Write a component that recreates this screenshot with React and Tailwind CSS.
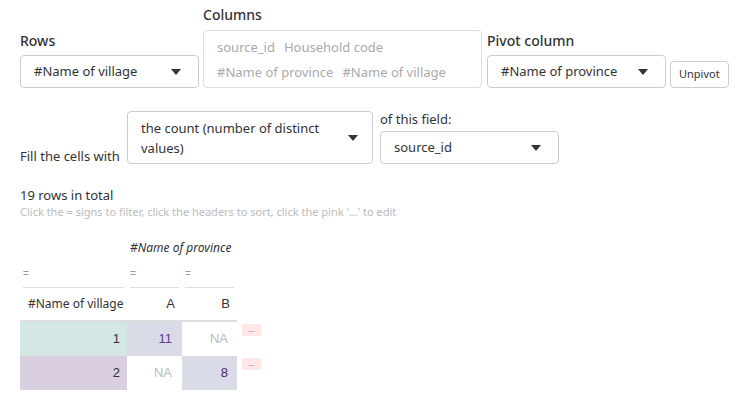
import { useState } from "react";

const Caret = () => (
  <svg width="10" height="6" viewBox="0 0 10 6" className="shrink-0">
    <path d="M0 0 L10 0 L5 6 Z" fill="#333" />
  </svg>
);

const Select = ({ value, className = "" }) => (
  <div
    className={`flex items-center justify-between border border-[#cccccc] rounded-[4px] bg-white pl-[13px] pr-[17px] text-[13px] text-[#333] ${className}`}
  >
    <span>{value}</span>
    <Caret />
  </div>
);

const rows = [
  { name: "1", a: "11", b: "NA", bg: "bg-[#d3e8e5]" },
  { name: "2", a: "NA", b: "8", bg: "bg-[#dacfdf]" },
];

const App = () => {
  const [pivot] = useState("#Name of province");

  return (
    <div className="w-[745px] h-[406px] bg-white pl-[20px] pt-[5px] font-['Noto_Sans',sans-serif] text-[#333]">
      {/* top controls */}
      <div className="flex items-end">
        <div className="w-[179px]">
          <div className="text-[14px] font-medium leading-[20px] mb-[4px]">Rows</div>
          <Select value="#Name of village" className="h-[33px]" />
        </div>
        <div className="ml-[4px]">
          <div className="text-[14px] font-medium leading-[20px] mb-[5px]">Columns</div>
          <div className="w-[279px] h-[58px] border border-[#dddddd] rounded-[4px] pl-[13px] pt-[4px] text-[13px] text-[#aaaaaa] leading-[25px]">
            <div className="flex gap-[9px]">
              <span>source_id</span>
              <span>Household code</span>
            </div>
            <div className="flex gap-[9px]">
              <span>#Name of province</span>
              <span>#Name of village</span>
            </div>
          </div>
        </div>
        <div className="ml-[5px] w-[179px]">
          <div className="text-[14px] font-medium leading-[20px] mb-[4px]">Pivot column</div>
          <Select value={pivot} className="h-[33px]" />
        </div>
        <button className="ml-[4px] h-[27px] px-[8px] border border-[#cccccc] rounded-[4px] text-[11px] text-[#333] bg-white">
          Unpivot
        </button>
      </div>

      {/* fill controls */}
      <div className="flex items-end mt-[21px]">
        <div className="w-[107px] text-[13px] leading-[14px] mb-[1px] whitespace-nowrap">Fill the cells with</div>
        <div className="w-[246px] h-[53px] flex items-center justify-between border border-[#cccccc] rounded-[4px] pl-[13px] pr-[14px] text-[13px] leading-[20px]">
          <span className="w-[185px]">the count (number of distinct values)</span>
          <Caret />
        </div>
        <div className="ml-[7px]">
          <div className="text-[13px] leading-[20px] mb-[2px]">of this field:</div>
          <Select value="source_id" className="w-[179px] h-[33px]" />
        </div>
      </div>

      <div className="mt-[22px] text-[13px] leading-[18px]">19 rows in total</div>
      <div className="text-[11px] leading-[16px] text-[#bbbbbb]">
        Click the = signs to filter, click the headers to sort, click the pink '...' to edit
      </div>

      {/* pivot table */}
      <div className="mt-[16px] grid grid-cols-[107px_55px_55px_30px] font-['Liberation_Sans',sans-serif] text-[12px]">
        <div />
        <div className="col-span-2 pl-[3px] h-[24px] leading-[24px] italic font-['Noto_Sans',sans-serif] text-[12px] text-[#333] whitespace-nowrap">
          #Name of province
        </div>
        <div />

        {[0, 1, 2].map((i) => (
          <div key={i} className="px-[3px] pt-[7px]">
            <div className="h-[21px] border-b border-[#dddddd] text-[10px] text-[#999] leading-[14px]">=</div>
          </div>
        ))}
        <div />

        <div className="h-[34px] flex items-center pl-[8px] border-b-2 border-[#dddddd] text-[#333] text-[12px] whitespace-nowrap font-['Noto_Sans',sans-serif]">
          #Name of village
        </div>
        <div className="h-[34px] flex items-center justify-end pr-[7px] border-b-2 border-[#dddddd] text-[13px]">A</div>
        <div className="h-[34px] flex items-center justify-end pr-[7px] border-b-2 border-[#dddddd] text-[13px]">B</div>
        <div />

        {rows.map((r) => (
          <>
            <div key={r.name + "n"} className={`h-[34px] flex items-center justify-end pr-[7px] text-[13px] text-[#333] ${r.bg}`}>
              {r.name}
            </div>
            <div
              key={r.name + "a"}
              className={`h-[34px] flex items-center justify-end pr-[10px] text-[13px] ${
                r.a === "NA" ? "text-[#bbbbbb]" : "bg-[#d9dbe6] text-[#5b3b8c]"
              }`}
            >
              {r.a}
            </div>
            <div
              key={r.name + "b"}
              className={`h-[34px] flex items-center justify-end pr-[9px] text-[13px] ${
                r.b === "NA" ? "text-[#bbbbbb]" : "bg-[#d9dbe6] text-[#4b1f6f]"
              }`}
            >
              {r.b}
            </div>
            <div key={r.name + "e"} className="pl-[5px] pt-[2px]">
              <div className="w-[19px] h-[12px] bg-[#fde8e8] text-[8px] leading-[11px] text-[#993366] text-center">
                ...
              </div>
            </div>
          </>
        ))}
      </div>
    </div>
  );
};

export default App;
